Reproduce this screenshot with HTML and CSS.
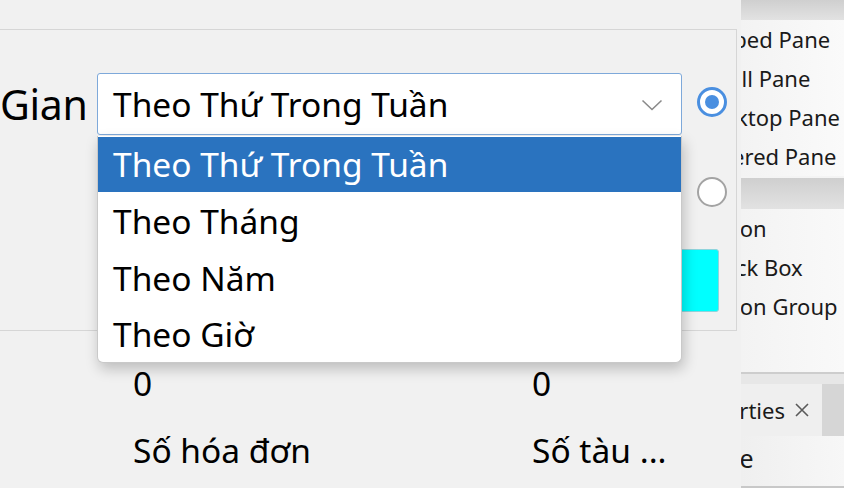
FILE: index.html
```html
<!DOCTYPE html>
<html lang="vi">
<head>
<meta charset="utf-8">
<title>Thống kê</title>
<link rel="stylesheet" href="styles.css">
</head>
<body>
<div class="app">
  <div class="main">
    <div class="group">
      <div class="row row-first">
        <div class="label">Gian</div>
        <div class="combo-wrap">
          <div class="combo">
            <span class="combo-text">Theo Thứ Trong Tuần</span>
            <svg class="chevron" width="22" height="12" viewBox="0 0 22 12"><path d="M1.5 1.5 L11 10.5 L20.5 1.5" fill="none" stroke="#8a8a8a" stroke-width="1.6"/></svg>
          </div>
          <ul class="dropdown">
            <li class="item selected">Theo Thứ Trong Tuần</li>
            <li class="item">Theo Tháng</li>
            <li class="item">Theo Năm</li>
            <li class="item">Theo Giờ</li>
          </ul>
        </div>
        <div class="radio checked"></div>
      </div>
      <div class="row">
        <div class="slot"></div>
        <div class="radio"></div>
      </div>
      <div class="row">
        <div class="cyan"></div>
      </div>
    </div>
    <div class="stats">
      <div class="stat stat-a">
        <div class="val">0</div>
        <div class="cap">Số hóa đơn</div>
      </div>
      <div class="stat">
        <div class="val">0</div>
        <div class="cap">Số tàu ...</div>
      </div>
    </div>
  </div>
  <div class="palette">
    <div class="band band-top"></div>
    <div class="plist plist-a">
      <div class="prow">Tabbed Pane</div>
      <div class="prow">Scroll Pane</div>
      <div class="prow">Desktop Pane</div>
      <div class="prow">Layered Pane</div>
    </div>
    <div class="band band-mid"></div>
    <div class="plist plist-b">
      <div class="prow">Button</div>
      <div class="prow">Check Box</div>
      <div class="prow">Button Group</div>
    </div>
    <div class="sep"></div>
    <div class="tabbar">
      <div class="tab">
        <span class="tab-text">Properties</span>
        <svg class="close" width="16" height="16" viewBox="0 0 16 16"><path d="M2 2 L14 14 M14 2 L2 14" stroke="#5a5a5a" stroke-width="1.6" fill="none"/></svg>
      </div>
      <div class="tab-rest"></div>
    </div>
    <div class="props">
      <div class="prop-row">Name</div>
    </div>
  </div>
</div>
</body>
</html>
```

FILE: styles.css
```css
* { box-sizing: border-box; }
html, body { margin: 0; padding: 0; }
body {
  width: 844px;
  height: 488px;
  overflow: hidden;
  background: #f1f1f1;
  font-family: "Noto Sans", "Open Sans", sans-serif;
  color: #000;
}
.app {
  display: flex;
  width: 844px;
  height: 488px;
}
.main {
  flex: 0 0 741px;
  padding-top: 29px;
}
.group {
  width: 737px;
  height: 302px;
  border-top: 1px solid #d6d6d6;
  border-right: 1px solid #d6d6d6;
  border-bottom: 1px solid #d6d6d6;
  padding-top: 43px;
  display: flex;
  flex-direction: column;
  gap: 26px;
}
.row {
  display: flex;
  align-items: center;
  height: 62px;
}
.row-first { position: relative; z-index: 2; }
.label {
  flex: 0 0 97px;
  font-size: 41px;
  line-height: 62px;
  white-space: nowrap;
  letter-spacing: -0.3px;
}
.combo-wrap {
  position: relative;
  flex: 0 0 585px;
  height: 62px;
}
.combo {
  height: 62px;
  background: #fff;
  border: 1px solid #7ea9da;
  border-radius: 3px;
  display: flex;
  align-items: center;
  padding-left: 15px;
  padding-right: 18px;
  justify-content: space-between;
}
.combo-text, .item, .val, .cap {
  font-size: 33.5px;
  white-space: nowrap;
}
.chevron { display: block; margin-top: 2px; }
.dropdown {
  position: absolute;
  left: 0;
  top: 63px;
  width: 585px;
  margin: 0;
  padding: 1px 0 0;
  list-style: none;
  background: #fff;
  border: 1px solid #c9c9c9;
  border-top: none;
  border-radius: 0 0 6px 6px;
  box-shadow: 2px 6px 14px rgba(0, 0, 0, 0.22);
}
.item {
  height: 56.5px;
  line-height: 58px;
  padding-left: 15px;
}
.item.selected {
  height: 55px;
  line-height: 55px;
  background: #2a73bf;
  color: #fff;
}
.radio {
  flex: 0 0 30px;
  width: 30px;
  height: 30px;
  margin-left: 15px;
  border-radius: 50%;
  border: 2px solid #a3a3a3;
  background: #fff;
  display: flex;
  align-items: center;
  justify-content: center;
}
.row-first .radio { margin-top: -4px; }
.radio.checked {
  border: 3px solid #4a8fe0;
}
.radio.checked::after {
  content: "";
  width: 14px;
  height: 14px;
  border-radius: 50%;
  background: #4a8fe0;
}
.slot { flex: 0 0 682px; }
.cyan {
  margin-left: 97px;
  width: 622px;
  height: 63px;
  background: #00ffff;
  border: 1px solid #8fd4dc;
  border-radius: 3px;
}
.stats {
  display: flex;
  padding-left: 133px;
  padding-top: 32px;
}
.stat-a { flex: 0 0 399px; }
.val { line-height: 40px; }
.cap { line-height: 40px; margin-top: 27px; }

.palette {
  flex: 0 0 103px;
  min-width: 0;
  overflow: hidden;
  background: #f4f4f4;
  display: flex;
  flex-direction: column;
  font-size: 22px;
  color: #1a1a1a;
}
.band {
  background: linear-gradient(#cfcfcf, #e2e2e2);
}
.band-top { height: 20px; }
.band-mid { height: 31px; margin-top: 2px; }
.plist-a { background: linear-gradient(90deg, #f3f3f3, #fafafa); }
.plist-b { height: 163px; background: linear-gradient(90deg, #f3f3f3, #f9f9f9); }
.prow {
  height: 39px;
  line-height: 39px;
  white-space: nowrap;
  overflow: hidden;
}
.plist-a .prow { text-indent: -44px; }
.plist-b .prow { text-indent: -45px; }
.sep {
  height: 12px;
  border-top: 2px solid #cdcdcd;
  background: #e7e7e7;
}
.tabbar {
  display: flex;
  height: 52px;
}
.tab {
  flex: 0 0 81px;
  min-width: 0;
  overflow: hidden;
  display: flex;
  align-items: center;
  justify-content: flex-end;
  gap: 9px;
  padding-right: 12px;
  background: #efefef;
  white-space: nowrap;
}
.tab-text { flex: 0 0 auto; }
.close { flex: 0 0 16px; display: block; }
.tab-rest { flex: 1; background: #d6d6d6; }
.props {
  flex: 1;
  background: linear-gradient(90deg, #efefef, #f7f7f7);
  border-bottom: 2px solid #c8c8c8;
}
.prop-row {
  font-size: 25px;
  line-height: 44px;
  white-space: nowrap;
  overflow: hidden;
  text-indent: -58px;
}
```
